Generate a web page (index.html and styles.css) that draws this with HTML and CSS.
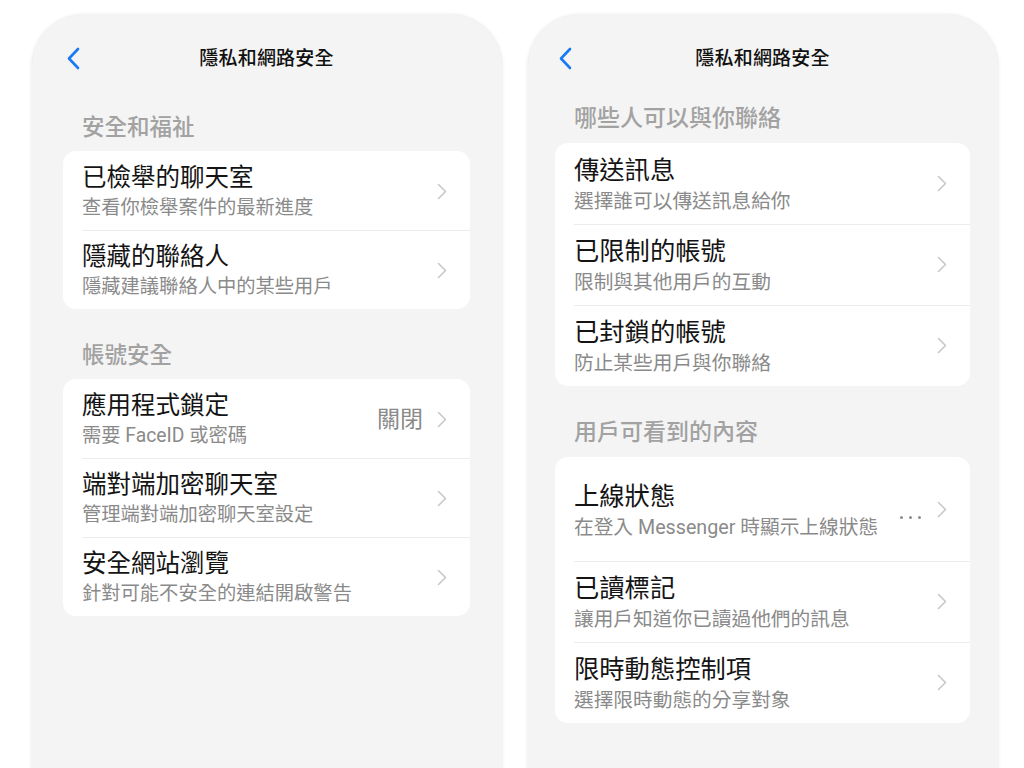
FILE: index.html
```html
<!DOCTYPE html>
<html lang="zh-Hant">
<head>
<meta charset="utf-8">
<title>隱私和網路安全</title>
<link rel="stylesheet" href="styles.css">
</head>
<body>
<div class="stage">
  <section class="phone phone-left">
    <header class="nav">
      <span class="back"><svg width="14" height="23" viewBox="0 0 14 23"><path d="M12 2 L3 11.5 L12 21" fill="none" stroke="#1a7af5" stroke-width="2.6" stroke-linecap="round" stroke-linejoin="round"/></svg></span>
      <h1 class="nav-title">隱私和網路安全</h1>
    </header>

    <h2 class="group-title first">安全和福祉</h2>
    <div class="card">
      <div class="row">
        <div class="texts"><div class="t">已檢舉的聊天室</div><div class="s">查看你檢舉案件的最新進度</div></div>
        <span class="chev"><svg width="10" height="17" viewBox="0 0 10 17"><path d="M1.5 1.5 L8.5 8.5 L1.5 15.5" fill="none" stroke="#c6c6c8" stroke-width="1.5" stroke-linecap="round" stroke-linejoin="round"/></svg></span>
      </div>
      <div class="row">
        <div class="texts"><div class="t">隱藏的聯絡人</div><div class="s">隱藏建議聯絡人中的某些用戶</div></div>
        <span class="chev"><svg width="10" height="17" viewBox="0 0 10 17"><path d="M1.5 1.5 L8.5 8.5 L1.5 15.5" fill="none" stroke="#c6c6c8" stroke-width="1.5" stroke-linecap="round" stroke-linejoin="round"/></svg></span>
      </div>
    </div>

    <h2 class="group-title">帳號安全</h2>
    <div class="card">
      <div class="row">
        <div class="texts"><div class="t">應用程式鎖定</div><div class="s">需要 FaceID 或密碼</div></div>
        <span class="value">關閉</span>
        <span class="chev"><svg width="10" height="17" viewBox="0 0 10 17"><path d="M1.5 1.5 L8.5 8.5 L1.5 15.5" fill="none" stroke="#c6c6c8" stroke-width="1.5" stroke-linecap="round" stroke-linejoin="round"/></svg></span>
      </div>
      <div class="row">
        <div class="texts"><div class="t">端對端加密聊天室</div><div class="s">管理端對端加密聊天室設定</div></div>
        <span class="chev"><svg width="10" height="17" viewBox="0 0 10 17"><path d="M1.5 1.5 L8.5 8.5 L1.5 15.5" fill="none" stroke="#c6c6c8" stroke-width="1.5" stroke-linecap="round" stroke-linejoin="round"/></svg></span>
      </div>
      <div class="row">
        <div class="texts"><div class="t">安全網站瀏覽</div><div class="s">針對可能不安全的連結開啟警告</div></div>
        <span class="chev"><svg width="10" height="17" viewBox="0 0 10 17"><path d="M1.5 1.5 L8.5 8.5 L1.5 15.5" fill="none" stroke="#c6c6c8" stroke-width="1.5" stroke-linecap="round" stroke-linejoin="round"/></svg></span>
      </div>
    </div>
  </section>

  <section class="phone phone-right">
    <header class="nav">
      <span class="back"><svg width="14" height="23" viewBox="0 0 14 23"><path d="M12 2 L3 11.5 L12 21" fill="none" stroke="#1a7af5" stroke-width="2.6" stroke-linecap="round" stroke-linejoin="round"/></svg></span>
      <h1 class="nav-title">隱私和網路安全</h1>
    </header>

    <h2 class="group-title first">哪些人可以與你聯絡</h2>
    <div class="card">
      <div class="row">
        <div class="texts"><div class="t">傳送訊息</div><div class="s">選擇誰可以傳送訊息給你</div></div>
        <span class="chev"><svg width="10" height="17" viewBox="0 0 10 17"><path d="M1.5 1.5 L8.5 8.5 L1.5 15.5" fill="none" stroke="#c6c6c8" stroke-width="1.5" stroke-linecap="round" stroke-linejoin="round"/></svg></span>
      </div>
      <div class="row">
        <div class="texts"><div class="t">已限制的帳號</div><div class="s">限制與其他用戶的互動</div></div>
        <span class="chev"><svg width="10" height="17" viewBox="0 0 10 17"><path d="M1.5 1.5 L8.5 8.5 L1.5 15.5" fill="none" stroke="#c6c6c8" stroke-width="1.5" stroke-linecap="round" stroke-linejoin="round"/></svg></span>
      </div>
      <div class="row">
        <div class="texts"><div class="t">已封鎖的帳號</div><div class="s">防止某些用戶與你聯絡</div></div>
        <span class="chev"><svg width="10" height="17" viewBox="0 0 10 17"><path d="M1.5 1.5 L8.5 8.5 L1.5 15.5" fill="none" stroke="#c6c6c8" stroke-width="1.5" stroke-linecap="round" stroke-linejoin="round"/></svg></span>
      </div>
    </div>

    <h2 class="group-title">用戶可看到的內容</h2>
    <div class="card">
      <div class="row tall">
        <div class="texts"><div class="t">上線狀態</div><div class="s">在登入 Messenger 時顯示上線狀態</div></div>
        <span class="dots"><i></i><i></i><i></i></span>
        <span class="chev"><svg width="10" height="17" viewBox="0 0 10 17"><path d="M1.5 1.5 L8.5 8.5 L1.5 15.5" fill="none" stroke="#c6c6c8" stroke-width="1.5" stroke-linecap="round" stroke-linejoin="round"/></svg></span>
      </div>
      <div class="row">
        <div class="texts"><div class="t">已讀標記</div><div class="s">讓用戶知道你已讀過他們的訊息</div></div>
        <span class="chev"><svg width="10" height="17" viewBox="0 0 10 17"><path d="M1.5 1.5 L8.5 8.5 L1.5 15.5" fill="none" stroke="#c6c6c8" stroke-width="1.5" stroke-linecap="round" stroke-linejoin="round"/></svg></span>
      </div>
      <div class="row">
        <div class="texts"><div class="t">限時動態控制項</div><div class="s">選擇限時動態的分享對象</div></div>
        <span class="chev"><svg width="10" height="17" viewBox="0 0 10 17"><path d="M1.5 1.5 L8.5 8.5 L1.5 15.5" fill="none" stroke="#c6c6c8" stroke-width="1.5" stroke-linecap="round" stroke-linejoin="round"/></svg></span>
      </div>
    </div>
  </section>
</div>
</body>
</html>
```

FILE: styles.css
```css
* { box-sizing: border-box; }
html, body {
  margin: 0;
  padding: 0;
  background: #ffffff;
  overflow: hidden;
  height: 768px;
}
body {
  font-family: "Roboto", "Noto Sans CJK TC", "Noto Sans CJK SC", sans-serif;
  color: #141414;
}
.stage {
  display: flex;
  gap: 26px;
  padding: 14px 0 0 32px;
}
.phone {
  width: 470px;
  height: 800px;
  background: #f4f4f4;
  border-radius: 52px 52px 0 0;
  box-shadow: 0 1px 4px rgba(0, 0, 0, 0.10), 0 0 1px rgba(0, 0, 0, 0.06);
  display: flex;
  flex-direction: column;
}
.phone-left { padding: 0 32px 0 31px; }
.phone-right { padding: 0 28px 0 27px; }

.nav {
  position: relative;
  height: 42px;
  margin-top: 24px;
  display: flex;
  align-items: center;
  justify-content: center;
}
.back {
  position: absolute;
  top: 9px;
  left: 3px;
  display: flex;
}
.nav-title {
  margin: 0;
  font-size: 19px;
  font-weight: 500;
  line-height: 42px;
  color: #111;
  letter-spacing: 0.2px;
}

.group-title {
  margin: 31px 0 9px 19px;
  font-size: 22.5px;
  line-height: 30px;
  font-weight: 500;
  color: #a2a2a2;
}
.phone-left .group-title.first { margin-top: 32px; }
.phone-right .group-title { font-size: 23px; margin: 32px 0 9px 19px; }
.phone-right .group-title.first { margin-top: 24px; }

.card {
  background: #ffffff;
  border-radius: 13px;
  display: flex;
  flex-direction: column;
}

.row {
  display: flex;
  align-items: center;
  padding: 12px 23px 9px 19px;
  height: 79px;
}
.card .row + .row {
  background-image: linear-gradient(#ececec, #ececec);
  background-size: calc(100% - 19px) 1px;
  background-position: 19px 0;
  background-repeat: no-repeat;
}

.phone-right .row {
  height: 81px;
  padding: 13px 23px 9px 19px;
}
.phone-right .row.tall {
  height: 104px;
  padding: 25px 23px 20px 19px;
}

.texts {
  flex: 1;
  min-width: 0;
}
.t {
  font-size: 24.5px;
  line-height: 30px;
  font-weight: 400;
  color: #141414;
  white-space: nowrap;
}
.s {
  margin-top: 2px;
  font-size: 19.3px;
  line-height: 26px;
  color: #8a8a8a;
  white-space: nowrap;
}
.phone-right .t { font-size: 25.3px; }
.phone-right .s { font-size: 19.7px; margin-top: 3px; }

.value {
  font-size: 23px;
  line-height: 30px;
  color: #8a8a8a;
  margin-right: 14px;
}
.chev {
  display: flex;
  width: 10px;
  flex: none;
}
.row .chev { margin-top: -2px; }
.phone-right .row .chev { margin-top: -4px; }
.dots {
  display: flex;
  flex: none;
  gap: 6px;
  margin-right: 16px;
  margin-top: 12px;
}
.dots i {
  display: block;
  width: 3px;
  height: 3px;
  border-radius: 50%;
  background: #8c8c8c;
}
```
